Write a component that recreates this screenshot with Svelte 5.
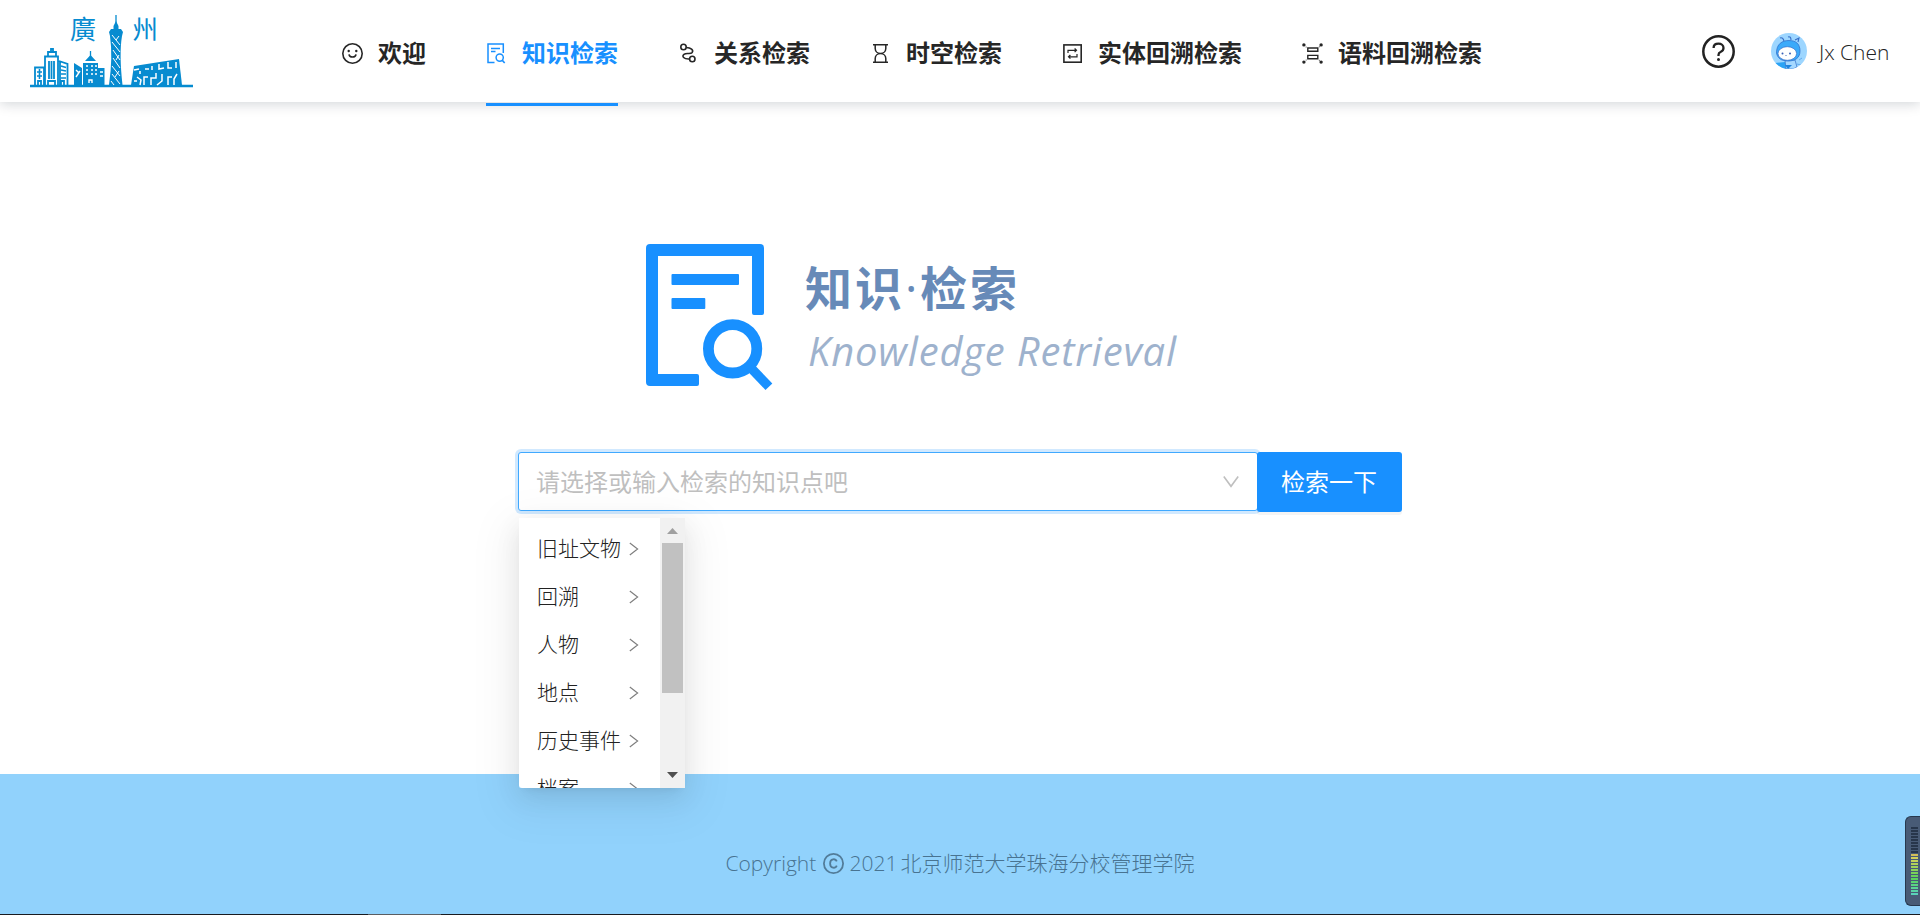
<script>
  const nav = [
    { icon: 'smile', label: '欢迎' },
    { icon: 'search', label: '知识检索', active: true },
    { icon: 'relation', label: '关系检索' },
    { icon: 'hourglass', label: '时空检索' },
    { icon: 'entity', label: '实体回溯检索' },
    { icon: 'corpus', label: '语料回溯检索' }
  ];
  const options = ['旧址文物', '回溯', '人物', '地点', '历史事件', '档案'];
  const bars = Array.from({ length: 23 }, (_, i) => i);
  const barColor = (i) => (i < 9 ? '#27364b' : `hsl(${50 + (i - 9) * 9}, 58%, 59%)`);
</script>

<div class="page">
  <header>
    <svg class="logo" width="166" height="88" viewBox="0 -12 166 88" fill="none" stroke="#058bd0">
      <g fill="#078bd0" stroke="none" class="logo-text">
        <text x="41" y="27">廣</text>
        <text x="103" y="27">州</text>
      </g>
      <path d="M1 74H164" stroke-width="2.4" />
      <g stroke-width="1.8">
        <path d="M6 73V55.500H15V73M16 73V44.500H29V73M19 44V40H27V44M22 40V37H24V40M30 49L38.500 52V73M31 73V50" />
        <path d="M20 49V67M22.500 49V67M25 49V67" />
        <path d="M32 54L37 55.500M32 58L37 59M32 62H37M32 66H37M8 60H13M8 64H13M10.500 57V67" stroke-width="1.600" />
        <path d="M9 73V69H12V73M19 73V69H26V73M32 73V69H35V73" />
      </g>
      <path d="M45 51L53 56V73H45ZM54 51H69V73H54ZM56 49L61.500 43L67 49ZM69 56H75.500V73H69Z" fill="#078bd0" stroke="none" />
      <path d="M61.500 39V46" stroke-width="1.300" />
      <path d="M57 54H59M62 54H64M66 54H68M57 58H59M62 58H64M66 58H68M57 62H59M62 62H64M66 62H68M47 58L50 61M51 59L47 65M71 60H74M71 64H74M60 71V68H63V71" stroke="#fff" stroke-width="1.400" />
      <path d="M87 3V16" stroke-width="1.300" />
      <path d="M84.500 20V14L87 9L89.500 14V20ZM80 20L82 17H92L94 20L93 24Q90 42 93.500 73H80Q84 45 81 24Z" fill="#078bd0" stroke="none" />
      <path d="M83 23L91 33M83 30L91 40M84 38L91 48M84 46L91 56M83 54L91 64M83 62L91 72M82 69L85 73M90 24L87 28M90 43L87 48M90 59L86 65" stroke="#fff" stroke-width="1" />
      <path d="M102 73L105 54L150 47L153 73Z" fill="#078bd0" stroke="none" />
      <path d="M105 58L110 57M111 59V62M108 65L112 68L111 73M116 57H120M119 65H115V73M123 54V58M127 61V66H122V73M130 52V57L135 56M133 62V69L128 73M139 50V56H143M143 65H139V73M147 50V56M148 62L145 67V73M105 69H108" stroke="#fff" stroke-width="1.500" />
    </svg>

    <nav>
      {#each nav as item}
        <a class:active={item.active} href="#top">
          <svg width="21" height="21" viewBox="0 0 21 21" fill="none" stroke="currentColor" stroke-width="1.600">
            {#if item.icon === 'smile'}
              <circle cx="10.500" cy="10.500" r="9.700" />
              <path d="M7 11.300Q7.400 14 10.500 14T14 11.300" />
              <circle cx="6.700" cy="8" r="1.200" fill="currentColor" stroke="none" />
              <circle cx="14.300" cy="8" r="1.200" fill="currentColor" stroke="none" />
            {:else if item.icon === 'search'}
              <path d="M17.300 10V1H2V19.400H8.500M5 5.400H14M5 8.500H9.500" stroke-width="1.500" />
              <circle cx="13.700" cy="14.600" r="3.600" stroke-width="1.500" />
              <path d="M16.300 17.400L18.700 20" />
            {:else if item.icon === 'relation'}
              <circle cx="5.500" cy="4" r="2.700" />
              <circle cx="14.300" cy="16" r="2.700" />
              <path d="M8.300 4.500C13 4.700 15.700 7.200 14.200 9.400C12.500 11.700 8.500 9.300 6 11.300C3.500 13.400 5.600 16.300 11.500 16" />
            {:else if item.icon === 'hourglass'}
              <path d="M3 1.700H18M3 19.300H18M5.200 2V5.500C5.200 8.300 7.500 10.500 10.500 10.500C13.500 10.500 15.800 8.300 15.800 5.500V2M5.200 19V15.500C5.200 12.700 7.500 10.500 10.500 10.500C13.500 10.500 15.800 12.700 15.800 15.500V19" stroke-width="1.500" />
            {:else if item.icon === 'entity'}
              <rect x="1.900" y="1.900" width="17.300" height="17.300" />
              <path d="M6 10V7.300H14M12.600 5.500L14.500 7.300L12.600 9.100M15 11V13.800H7M8.400 12L6.500 13.800L8.400 15.600" stroke-width="1.200" />
            {:else}
              <path d="M5.800 5H15.800V8.300H5.800ZM5.800 12.400H15.800V15.700H5.800Z" stroke-width="1.400" />
              <g fill="currentColor" stroke="none">
                <circle cx="1.900" cy="1.900" r="1.700" /><circle cx="19.100" cy="1.900" r="1.700" />
                <circle cx="1.900" cy="19.100" r="1.700" /><circle cx="19.100" cy="19.100" r="1.700" />
                <circle cx="4.100" cy="4.100" r=".5" /><circle cx="17.300" cy="3.800" r=".5" />
                <circle cx="4.100" cy="17" r=".5" /><circle cx="17.300" cy="17.200" r=".5" />
              </g>
            {/if}
          </svg>
          <span>{item.label}</span>
        </a>
      {/each}
    </nav>

    <div class="account">
      <svg width="33" height="33" viewBox="0 0 33 33" fill="none" stroke="#222" stroke-width="2.500">
        <circle cx="16.500" cy="16.500" r="15.200" />
        <path d="M11.600 13C11.600 10.200 13.700 8.700 16.500 8.700S21.500 10.400 21.500 13C21.500 15.200 20.200 16.200 18.500 17Q16.500 17.800 16.500 20V21" stroke-width="2.300" />
        <circle cx="16.500" cy="24.600" r="1.500" fill="#222" stroke="none" />
      </svg>
      <svg class="avatar" width="36" height="36" viewBox="0 0 36 36">
        <clipPath id="round"><circle cx="18" cy="18" r="18" /></clipPath>
        <g clip-path="url(#round)">
          <path d="M0 0H36V36H0Z" fill="#9dd6ff" />
          <path d="M4 30L14 29L18 36H5Z" fill="#2ba3f5" />
          <path d="M14 27H24L26 34L22 36H15Z" fill="#a5d8ff" stroke="#3d78ce" stroke-width=".8" />
          <path d="M14 32H21L17 36Z" fill="#1e83df" />
          <path d="M13 8Q12 4 9 5M20 7Q20 3 17 4M27 9L28 5L24 7" fill="none" stroke="#376fc8" stroke-width="1.100" />
          <path d="M5.500 20C5.500 11 11 7.500 18 7.500S29 11 29 18S24 28 17 28S6.500 25 5.500 20Z" fill="#3baafa" stroke="#3274ce" stroke-width=".8" />
          <ellipse cx="16.300" cy="20.500" rx="9.300" ry="6.800" fill="#fff" stroke="#396fc7" stroke-width=".7" />
          <g fill="#385fb6"><circle cx="11.500" cy="20.500" r="1" /><circle cx="19" cy="20.500" r="1" /><circle cx="15" cy="22.500" r=".6" /></g>
          <path d="M28 27L31 25M26 31L30 32" stroke="#62abed" />
        </g>
      </svg>
      <span class="user">Jx Chen</span>
    </div>
  </header>

  <main>
    <section class="hero">
      <svg width="128" height="148" viewBox="0 0 128 148" fill="#1890ff">
        <path d="M4 0H114Q118 0 118 4V69Q118 71 116 71H108Q106 71 106 69V12H12V130H51Q53 130 53 132V140Q53 142 51 142H4Q0 142 0 138V4Q0 0 4 0Z" />
        <rect x="25.500" y="30" width="67.500" height="11" rx="1" />
        <rect x="25.500" y="54" width="33.800" height="11" rx="1" />
        <circle cx="86.600" cy="104.800" r="24.200" fill="none" stroke="#1890ff" stroke-width="10.800" />
        <path d="M104 123L122.900 142.700" stroke="#1890ff" stroke-width="9.500" />
      </svg>
      <div class="titles">
        <h1>知识<i>·</i>检索</h1>
        <p>Knowledge Retrieval</p>
      </div>
    </section>

    <div class="search">
      <div class="select">
        <span>请选择或输入检索的知识点吧</span>
        <svg width="18" height="14" viewBox="0 0 18 14" fill="none" stroke="#bfbfbf" stroke-width="1.600"><path d="M1.800 1.500L9 11.300L16.200 1.500" /></svg>
      </div>
      <button><span>检索一下</span></button>
      <div class="dropdown">
        <ul>
          {#each options as option}
            <li>
              <span>{option}</span>
              <svg width="10" height="14" viewBox="0 0 10 14" fill="none" stroke="#808080" stroke-width="1.200"><path d="M.8 1L8.600 7L.8 13" /></svg>
            </li>
          {/each}
        </ul>
        <div class="scrollbar">
          <svg width="11" height="6" viewBox="0 0 11 6" fill="#a0a0a0"><path d="M0 6L5.500 0L11 6Z" /></svg>
          <div class="thumb"></div>
          <svg class="down" width="11" height="6" viewBox="0 0 11 6" fill="#505050"><path d="M0 0H11L5.500 6Z" /></svg>
        </div>
      </div>
    </div>
  </main>

  <footer>
    <span class="latin copy">Copyright</span>
    <svg width="21" height="21" viewBox="0 0 21 21" fill="none" stroke="currentColor" stroke-width="1.800">
      <circle cx="10.500" cy="10.500" r="9.600" /><path d="M13.800 8.400C12.600 5.200 7.100 5.500 7.100 10.500S12.600 15.800 13.800 12.600" />
    </svg>
    <span class="latin year">2021</span>
    <span class="school">北京师范大学珠海分校管理学院</span>
  </footer>
  <div class="edge"></div>

  <div class="meter">
    {#each bars as i}
      <b style:background={barColor(i)}></b>
    {/each}
  </div>
</div>

<style>
  :global(body) { margin: 0; overflow: hidden; }
  * { box-sizing: border-box; }
  svg { display: block; flex: none; }
  .page {
    position: relative;
    display: flex;
    flex-direction: column;
    height: 915px;
    background: #fff;
    color: #222;
    font-family: "Noto Sans CJK SC", sans-serif;
    font-size: 21px;
    font-weight: 300;
  }
  header {
    position: relative;
    display: flex;
    height: 102px;
    flex: none;
    padding: 0 30px 0 29px;
    background: #fff;
    box-shadow: 0 2px 12px rgba(0, 21, 41, 0.18);
  }
  .logo-text { font: 400 26px "Noto Sans CJK TC", serif; }
  nav { display: flex; gap: 60px; margin-left: 147px; height: 106px; }
  nav a {
    display: flex;
    align-items: center;
    gap: 15px;
    color: #262626;
    text-decoration: none;
    font-size: 24px;
    font-weight: 700;
    border-bottom: 3px solid transparent;
    white-space: nowrap;
  }
  nav a svg { margin-top: 4px; }
  nav a span { line-height: 36px; }
  nav a.active { color: #1890ff; border-color: #1890ff; }
  .account { display: flex; align-items: center; margin-left: auto; height: 102px; }
  .avatar { margin-left: 36px; }
  .user {
    width: 71px;
    margin: 2px 0 0 12px;
    font-family: "Open Sans", sans-serif;
    font-size: 21px;
    font-weight: 300;
    white-space: nowrap;
  }
  main { flex: 1; display: flex; flex-direction: column; padding: 142px 518px 0; }
  .hero { display: flex; margin-left: 128px; height: 208px; }
  .titles { margin-left: 31px; }
  h1 { margin: 12px 0 0; font-size: 47px; line-height: 60px; letter-spacing: 3px; font-weight: 700; color: #678ab8; display: flex; height: 60px; }
  h1 i { width: 15px; font: 400 47px/64px "Open Sans", sans-serif; letter-spacing: 0; }
  p {
    margin: 7px 0 0 3px;
    font: italic 400 40px/56px "Open Sans", sans-serif;
    letter-spacing: 0.8px;
    color: #9eb2cd;
    white-space: nowrap;
  }
  .search { position: relative; display: flex; width: 884px; }
  .select {
    display: flex;
    align-items: center;
    justify-content: space-between;
    width: 740px;
    height: 59px;
    padding: 0 17px;
    border: 1px solid #40a9ff;
    border-radius: 3px;
    box-shadow: 0 0 0 3px rgba(24, 144, 255, 0.2);
    background: #fff;
    color: #bfbfbf;
    font-size: 24px;
    font-weight: 400;
  }
  .select span { line-height: 36px; margin-top: -2px; }
  button {
    position: relative;
    width: 145px;
    height: 60px;
    margin-left: -1px;
    padding: 0 1px 3px 0;
    border: 0;
    border-radius: 3px;
    background: #1890ff;
    box-shadow: 0 3px 0 rgba(0, 0, 0, 0.045);
    color: #fff;
    font: 400 24px "Noto Sans CJK SC", sans-serif;
  }
  .dropdown {
    position: absolute;
    z-index: 2;
    top: 66px;
    left: 1px;
    display: flex;
    width: 166px;
    height: 270px;
    overflow: hidden;
    border-radius: 3px 0 0 3px;
    background: #fff;
  }
  .search::after {
    content: "";
    position: absolute;
    z-index: 1;
    top: 66px;
    left: 1px;
    width: 166px;
    height: 270px;
    box-shadow: 0 4px 9px -6px rgba(0, 0, 0, 0.12), 0 9px 24px rgba(0, 0, 0, 0.08), 0 13px 42px 12px rgba(0, 0, 0, 0.05);
  }
  ul { flex: 1; margin: 0; padding: 5px 0 0; list-style: none; }
  li { display: flex; align-items: center; justify-content: space-between; height: 48px; padding: 0 21px 0 18px; }
  li svg { margin-top: 3px; }
  .scrollbar { display: flex; flex-direction: column; align-items: center; width: 25px; padding: 10px 0; background: #f1f1f1; }
  .thumb { width: 21px; height: 150px; margin-top: 9px; background: #c1c1c1; }
  .down { margin-top: auto; }
  footer {
    display: flex;
    flex: none;
    justify-content: center;
    height: 140px;
    padding-top: 73px;
    background: #91d2fc;
    color: #487391;
    line-height: 32px;
    white-space: nowrap;
  }
  footer svg { margin: 6px 6px 0 6px; color: #527c99; }
  .latin { font-family: "Open Sans", sans-serif; font-size: 21px; font-weight: 300; }
  .copy { width: 91px; }
  .year { width: 45px; margin-right: 6px; }
  .school { margin-top: -1px; }
  .edge {
    flex: none;
    height: 1px;
    background: linear-gradient(90deg, #191b20 368px, #5a5d62 368px, #5a5d62 441px, #191b20 441px);
  }
  .meter {
    position: absolute;
    right: 0;
    top: 816px;
    display: flex;
    flex-direction: column;
    gap: 1px;
    width: 15px;
    height: 90px;
    padding: 10px 2px 0 5px;
    border: 1px solid #26384e;
    border-right: 0;
    border-radius: 6px 0 0 6px;
    background: #485b76;
  }
  .meter b { height: 2px; flex: none; }
</style>
